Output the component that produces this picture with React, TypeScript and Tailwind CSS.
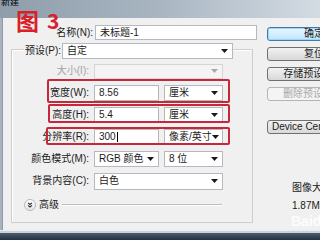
import React from "react";

const Arrow = () => (
  <svg width="7" height="4" viewBox="0 0 7 4" className="shrink-0">
    <path d="M0 0 L7 0 L3.5 4 Z" fill="#1a1a1a" />
  </svg>
);

function Select({ text, className, disabled }: { text: string; className: string; disabled?: boolean }) {
  return (
    <div
      className={`flex items-center justify-between pl-[4px] pr-[4px] border ${
        disabled ? "border-[#d5d5d5] bg-[#f4f4f4] text-[#9a9a9a]" : "border-[#b5b9bf] bg-white"
      } ${className}`}
    >
      <span className="whitespace-nowrap">{text}</span>
      {disabled ? (
        <svg width="7" height="4" viewBox="0 0 7 4" className="shrink-0">
          <path d="M0 0 L7 0 L3.5 4 Z" fill="#a8a8a8" />
        </svg>
      ) : (
        <Arrow />
      )}
    </div>
  );
}

function Input({ text, className, caret }: { text: string; className: string; caret?: boolean }) {
  return (
    <div className={`flex items-center pl-[4px] border border-[#b5b9bf] bg-white ${className}`}>
      <span className="whitespace-nowrap">{text}</span>
      {caret && <span className="w-px h-[10px] bg-black ml-px" />}
    </div>
  );
}

function Row({ label, children, dim, box }: { label: string; children: React.ReactNode; dim?: boolean; box?: string }) {
  return (
    <div className="relative h-[22px] flex items-center">
      <div className={`w-[77px] flex justify-end whitespace-nowrap ${dim ? "text-[#a0a0a0]" : ""}`}>{label}</div>
      <div className="ml-[5px] flex items-center gap-[5px]">{children}</div>
      {/* hand-drawn red annotation */}
      {box && <div className={`absolute border-2 border-[#c6283a] rounded-[2px] ${box}`} />}
    </div>
  );
}

function Button({ text, kind, w = "w-[94px]" }: { text: string; kind?: "default" | "disabled"; w?: string }) {
  const style =
    kind === "default"
      ? "border-[#3d7bad] bg-gradient-to-b from-[#eaf6fd] to-[#bee6fd] shadow-[inset_0_0_0_1px_#9fd5f6]"
      : kind === "disabled"
      ? "border-[#b5b5b5] bg-[#f4f4f4] text-[#a8a8a8]"
      : "border-[#707070] bg-gradient-to-b from-[#f2f2f2] to-[#d8d8d8]";
  return (
    <div className={`${w} h-[14px] shrink-0 border rounded-[3px] flex items-center justify-center whitespace-nowrap ${style}`}>
      {text}
    </div>
  );
}

export default function App() {
  return (
    <div className="w-[320px] h-[240px] overflow-hidden relative flex flex-col bg-[#f0f0f0] text-[10px] leading-none text-[#1b1b1b] font-['Liberation_Sans','Noto_Sans_CJK_SC',sans-serif]">
      {/* title bar */}
      <div className="h-[18px] shrink-0 bg-gradient-to-r from-[#8f9dab] via-[#a9b6c2] to-[#d3dbe3] flex items-start">
        <span className="ml-[1px] -mt-[2px] text-[9px] text-black">新建</span>
      </div>

      <div className="flex-1 flex min-h-0">
        <div className="w-[3px] bg-[#a7b4c0] border-r border-[#8e99a4]" />
        <div className="flex-1 flex min-w-0">
          {/* left column */}
          <div className="w-[255px] shrink-0 flex flex-col">
            <div className="mt-[7px] h-[15px] flex items-center">
              <div className="w-[90px] text-right">名称(N):</div>
              <Input text="未标题-1" className="ml-[2px] w-[162px] h-[15px]" />
            </div>

            <div className="mt-[9px] ml-[8px] w-[242px] h-[174px] border border-[#cdcdcd] shadow-[inset_1px_1px_0_#ffffff] flex flex-col">
              <div className="-mt-[7px] ml-[12px] flex items-center w-fit">
                <div className="w-[38px] bg-[#f0f0f0] pl-[1px] h-[10px] flex items-center">预设(P):</div>
                <Select text="自定" className="w-[171px] h-[16px]" />
              </div>

              <div className="mt-[1px] flex flex-col">
                <Row label="大小(I):" dim>
                  <Select text="" className="w-[129px] h-[15px]" disabled />
                </Row>
                <Row label="宽度(W):" box="left-[35px] w-[183px] -top-[3px] h-[24px]">
                  <Input text="8.56" className="w-[65px] h-[16px]" />
                  <Select text="厘米" className="w-[59px] h-[16px]" />
                </Row>
                <Row label="高度(H):" box="left-[36px] w-[182px] top-0 h-[19px]">
                  <Input text="5.4" className="w-[65px] h-[16px]" />
                  <Select text="厘米" className="w-[59px] h-[16px]" />
                </Row>
                <Row label="分辨率(R):" box="left-[34px] w-[184px] top-[1px] h-[18px]">
                  <Input text="300" className="w-[65px] h-[16px]" caret />
                  <Select text="像素/英寸" className="w-[59px] h-[16px]" />
                </Row>
                <Row label="颜色模式(M):">
                  <Select text="RGB 颜色" className="w-[65px] h-[16px]" />
                  <Select text="8 位" className="w-[59px] h-[16px]" />
                </Row>
                <Row label="背景内容(C):">
                  <Select text="白色" className="w-[129px] h-[17px]" />
                </Row>
              </div>

              <div className="mt-[7px] ml-[12px] flex items-center">
                <div className="w-[12px] h-[12px] rounded-full border border-[#b8b8b8] bg-gradient-to-b from-white to-[#e4e4e4] flex items-center justify-center">
                  <svg width="6" height="6" viewBox="0 0 6 6">
                    <path d="M1 0.8 L3 2.5 L5 0.8 M1 3.3 L3 5 L5 3.3" stroke="#333" strokeWidth="1.1" fill="none" />
                  </svg>
                </div>
                <span className="ml-[3px]">高级</span>
                <div className="ml-[3px] w-[160px] h-[2px] border-t border-[#bdbdbd] border-b border-b-white" />
              </div>
            </div>
          </div>

          {/* right column */}
          <div className="ml-[9px] pt-[9px] flex flex-col min-w-0">
            <Button text="确定" kind="default" />
            <div className="mt-[6px]"><Button text="复位" /></div>
            <div className="mt-[6px]"><Button text="存储预设(S)..." /></div>
            <div className="mt-[6px]"><Button text="删除预设(D)..." kind="disabled" /></div>
            <div className="mt-[19px]"><Button text="Device Central..." w="w-[84px]" /></div>
            <div className="mt-[49px] ml-[25px] whitespace-nowrap">图像大小:</div>
            <div className="mt-[8px] ml-[25px] whitespace-nowrap">1.87M</div>
            <div className="mt-[3px] ml-[24px] text-[14px] font-bold text-white/80 whitespace-nowrap">Baidu</div>
          </div>
        </div>
      </div>

      <div className="h-[3px] shrink-0 bg-[#c9d2da] border-t border-[#e8edf1]" />
      <div className="h-[7px] shrink-0 bg-gradient-to-b from-[#4b5d70] to-[#233140]" />

      {/* red handwritten annotation */}
      <div className="absolute left-[16px] top-[9px] flex items-start text-[#d9202a] font-['Noto_Sans_CJK_SC',sans-serif] font-bold">
        <span className="text-[23px] leading-none">图</span>
        <span className="ml-[8px] mt-[1px] text-[21px] leading-none">3</span>
      </div>
    </div>
  );
}
